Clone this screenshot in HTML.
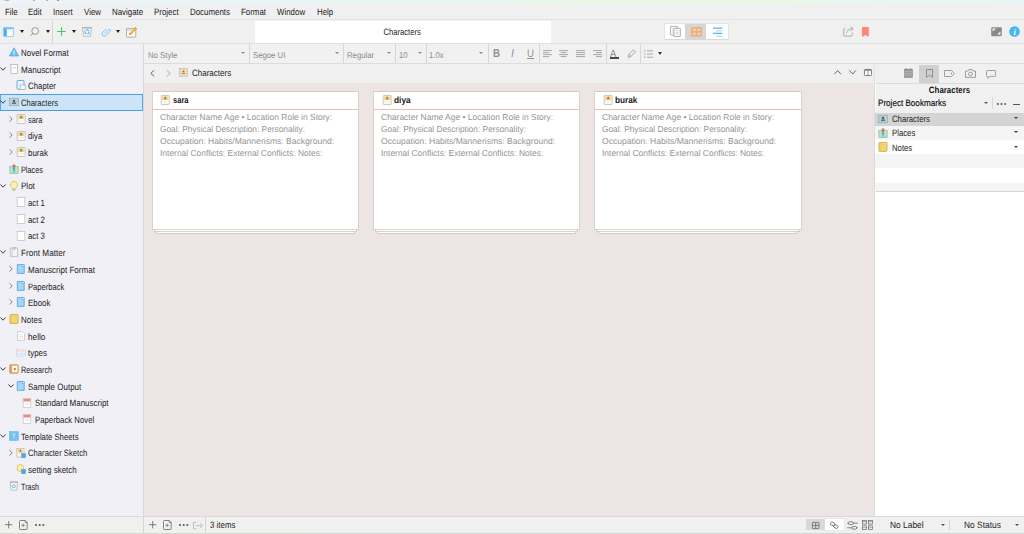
<!DOCTYPE html>
<html><head><meta charset="utf-8"><title>Scrivener - Characters</title>
<style>
html,body{margin:0;padding:0;}
body{width:1024px;height:534px;position:relative;overflow:hidden;background:#f0f0f0;font-family:"Liberation Sans",sans-serif;font-size:10px;color:#1a1a1a;line-height:1;}
.abs,#app *{position:absolute;}
#app{position:absolute;left:0;top:0;width:1024px;height:534px;overflow:hidden;}
#app svg{position:static;display:block;overflow:visible;}
#app svg *{position:static;}
.t{display:inline-block;white-space:nowrap;font-size:10px;line-height:12px;height:12px;transform:scale(var(--sx,.79),var(--sy,.92)) skewX(.1deg);transform-origin:0 50%;}
.tc{transform-origin:50% 50%;}
/* title strip */
#strip{left:0;top:0;width:1024px;height:4px;overflow:hidden;background:linear-gradient(90deg,#eef3f8 0%,#eaf4f7 20%,#e5f6f4 40%,#ebf6e3 62%,#eaf7e6 76%,#e8f6f3 86%,#e8f5f6 100%);}
#menubar{left:0;top:4px;width:1024px;height:15.5px;background:#f0f0f0;}
#menubar .t{top:1.8px;}
#toolbar{left:0;top:19px;width:1024px;height:25px;background:#f0f0f0;border-top:1px solid #e3e3e3;border-bottom:1px solid #e0e0e0;box-sizing:border-box;}
#titlebox{left:254.8px;top:20.5px;width:296.4px;height:22.7px;background:#fff;}
/* binder */
#binder{left:0;top:43.7px;width:143px;height:472.3px;background:#f0f0f6;}
#bdiv{left:143px;top:43.7px;width:1px;height:472.3px;background:#d8d8dc;}
.row{left:0;width:143px;height:16.69px;}
#selrow{left:0;top:94px;width:143.4px;height:16.8px;background:#cce4f7;box-shadow:inset 0 0 0 0.9px #4a9fe6;}
.row .lbl{top:3.2px;}
.row .ico{top:3.4px;}
/* format bar */
#fmtbar{left:144px;top:44px;width:880px;height:20px;background:#f1f1f1;border-bottom:1px solid #dcdcdc;box-sizing:border-box;}
#fmtbar .t{color:#898989;top:4.6px;--sx:.775;--sy:.85}
.vsep{width:0.8px;background:#d6d6d6;}
/* header bar */
#hdr{left:144px;top:64px;width:731px;height:19px;background:#f0f0f0;}
#cork{left:144px;top:82.9px;width:730.4px;height:433.1px;background:#ede5e3;}
#cdiv{left:874.3px;top:64px;width:0.9px;height:452px;background:linear-gradient(#e3e3e3 19px,#dedad9 19px);}
#inspfill{left:875.2px;top:83px;width:1px;height:433px;background:#fff;}
.card{top:91.8px;width:205.5px;height:137.5px;background:#fff;box-shadow:0 0 0 0.8px #d2cdcc;}
.stack{top:91.8px;width:205.5px;background:#fff;box-shadow:0 0 0 0.8px #cbc7c6;}
.stack.s1{height:139.5px;width:201.5px;}
.stack.s2{height:141.6px;width:197.1px;}
.card .cico{left:7.9px;top:3.6px;}
.card .ctitle{left:20px;top:2.6px;--sy:.9}
.card .cline{left:0;top:17.6px;width:100%;height:0.8px;background:#f2bcb6;}
.card .syn{left:7px;color:#949494;--sy:.87}
/* inspector */
#insp{left:876px;top:64px;width:148px;height:452px;background:#fff;clip-path:inset(0 0 0 -1px);}
#inspin{left:0;top:-0.7px;width:148px;height:453px;}
#insptabs{left:0;top:0;width:148px;height:20.6px;background:#f0f0f0;border-bottom:0.9px solid #dadada;box-sizing:border-box;}
#insptabsel{left:43px;top:1.6px;width:19.8px;height:18.2px;background:#d0d0d0;}
#insphead{left:0;top:20.6px;width:148px;height:28.3px;background:#f0f0f0;}
.lrow{left:-0.8px;width:148.8px;height:14.2px;}
.lrow .t{left:16.8px;top:1.6px;--sx:.775}
.lrow .ico{left:2.8px;top:2.2px;}
.tri{width:0;height:0;border-left:2.9px solid transparent;border-right:2.9px solid transparent;border-top:3.3px solid #1c1c1c;margin-left:-0.2px;}
/* footer */
#footer{left:0;top:516px;width:1024px;height:16.8px;background:#f0f0f0;border-top:0.8px solid #d9d9d9;box-sizing:border-box;}
#bottomstrip{left:0;top:532.9px;width:1024px;height:1.1px;background:linear-gradient(90deg,#cddccf 0%,#c9dcd2 50%,#c8dad7 100%);}
</style></head>
<body>
<div id="app">
<div id="strip"><span class="t" style="left:18px;top:-9.6px;--sx:.8;color:#333">sample project - Scrivener</span><span style="left:4px;top:-1px;width:6px;height:2.4px;border-radius:0 0 3px 3px;background:#b9bcc2"></span></div>
<div id="menubar">
<span class="t" style="left:5.1px">File</span><span class="t" style="left:28.3px">Edit</span><span class="t" style="left:53px">Insert</span><span class="t" style="left:83.8px">View</span><span class="t" style="left:111.8px">Navigate</span><span class="t" style="left:154.2px">Project</span><span class="t" style="left:189.8px">Documents</span><span class="t" style="left:240.6px">Format</span><span class="t" style="left:276.6px">Window</span><span class="t" style="left:316.6px">Help</span>
</div>
<div id="toolbar"></div>
<div id="titlebox"><span class="t tc" style="left:-0.7px;width:100%;text-align:center;top:5.9px;--sx:.762">Characters</span></div>
<div id="tbicons">
<!-- layout icon -->
<span style="left:3.2px;top:27px"><svg width="11" height="10" viewBox="0 0 11 10"><rect x="0.4" y="0.4" width="10.2" height="9.2" rx="0.8" fill="#f5f9fc" stroke="#7cc8f6" stroke-width="0.8"/><rect x="0.8" y="0.8" width="3" height="8.4" fill="#4cb0f0"/><rect x="0.8" y="0.8" width="9.4" height="1.4" fill="#6cc0f5"/></svg></span>
<span class="tri" style="left:19.8px;top:30.2px"></span>
<span style="left:30.2px;top:27px"><svg width="10" height="10" viewBox="0 0 10 10"><circle cx="5.2" cy="4" r="3.4" fill="none" stroke="#858585" stroke-width="0.8"/><path d="M2.9 6.5 L0.8 8.8" stroke="#858585" stroke-width="1"/></svg></span>
<span class="tri" style="left:46px;top:30.2px"></span>
<span class="vsep" style="left:52.2px;top:20.5px;height:22.5px"></span>
<span style="left:57.3px;top:27.4px"><svg width="9" height="9" viewBox="0 0 9 9"><path d="M4.5 0.3 V8.7 M0.3 4.5 H8.7" stroke="#3cc46e" stroke-width="1.1"/></svg></span>
<span class="tri" style="left:72.6px;top:30.2px"></span>
<span style="left:82px;top:27px"><svg width="10" height="10" viewBox="0 0 10 10"><path d="M0.4 0.7 H9.6 L8.4 9.3 H1.6 Z" fill="#f6f6f6" stroke="#b0b0b0" stroke-width="0.8"/><path d="M0.4 0.9 H9.6" stroke="#a8a8a8" stroke-width="1"/><circle cx="5" cy="5" r="2.1" fill="none" stroke="#4fb0f5" stroke-width="1.15" stroke-dasharray="3.5 0.9" stroke-dashoffset="1"/></svg></span>
<span style="left:100.6px;top:26.6px"><svg width="10" height="10.4" viewBox="0 0 10 10.4"><g transform="translate(5.1 5.2) rotate(45) scale(.92) translate(-3 -6.2)"><path d="M0.5 3.6 V9 A2.45 2.45 0 0 0 5.4 9 V2.2 A1.2 1.2 0 0 0 3 2.2 V8.6" fill="none" stroke="#63bff5" stroke-width="0.9"/></g></svg></span>
<span class="tri" style="left:116.2px;top:30.2px"></span>
<span style="left:126px;top:26.6px"><svg width="11" height="10.6" viewBox="0 0 11 10.6"><rect x="0.5" y="1.5" width="9.3" height="8.6" rx="0.5" fill="#f9f9f9" stroke="#a2a2a2" stroke-width="0.8"/><path d="M0.5 2 H9.8 M0.5 3.4 H9.8" stroke="#b9b9b9" stroke-width="0.6"/><path d="M4.1 7.2 L9.9 1.2" stroke="#f1b620" stroke-width="2.1"/><path d="M9.2 0.3 L10.8 1.9" stroke="#8a8a8a" stroke-width="0.9"/><path d="M3.4 8 L4.9 6.5 L3.3 6.6 Z" fill="#555"/></svg></span>
<!-- view mode buttons -->
<span style="left:664.6px;top:24.3px;width:63px;height:14.3px;background:#fff;box-shadow:0 0 0 0.6px #e0e0e0,0 0.8px 0 0.2px #cfcfcf"></span>
<span style="left:685.2px;top:24.3px;width:20.8px;height:14.3px;background:#d6d6d6"></span>
<span style="left:670.4px;top:26px"><svg width="10.8" height="11" viewBox="0 0 10.8 11"><rect x="0.4" y="0.4" width="6.9" height="8.6" rx="0.5" fill="#fcfcfc" stroke="#9a9a9a" stroke-width="0.75"/><path d="M1.8 2.6 H3.4 M1.8 4.4 H3.4 M1.8 6.2 H3.4" stroke="#c2c2c2" stroke-width="0.5"/><rect x="3.8" y="2.3" width="6.5" height="8.3" rx="0.5" fill="#fcfcfc" stroke="#8f8f8f" stroke-width="0.75"/><path d="M5.4 4.6 H8.8 M5.4 6.4 H8.8 M5.4 8.2 H8.8" stroke="#bdbdbd" stroke-width="0.55"/></svg></span>
<span style="left:691.3px;top:26.9px"><svg width="10.9" height="9.6" viewBox="0 0 10.9 9.6"><rect x="0" y="0" width="10.9" height="9.6" rx="1.3" fill="#f1ad72"/><g fill="#ead2bf"><rect x="1.75" y="1.55" width="3.15" height="2.45"/><rect x="6.2" y="1.55" width="3.15" height="2.45"/><rect x="1.75" y="5.6" width="3.15" height="2.45"/><rect x="6.2" y="5.6" width="3.15" height="2.45"/></g></svg></span>
<span style="left:712.9px;top:26.6px"><svg width="9.4" height="10" viewBox="0 0 9.4 10"><path d="M0 1.1 H9.3 M0 6.4 H9.3" stroke="#56b6f1" stroke-width="1.3"/><path d="M3 3.9 H9.3 M3 9.2 H9.3" stroke="#8acdf5" stroke-width="0.85"/></svg></span>
<!-- share + bookmark -->
<span style="left:843px;top:26.2px"><svg width="11" height="10.8" viewBox="0 0 11 10.8"><path d="M2.4 2.6 H1.6 Q0.7 2.6 0.7 3.5 V9.2 Q0.7 10.1 1.6 10.1 H8.4 Q9.3 10.1 9.3 9.2 V6.6" fill="none" stroke="#a2a2a2" stroke-width="0.85"/><path d="M3.6 7.4 C3.6 4.4 5.6 2.8 9.6 2.8 M7.6 0.6 L10.2 2.8 L7.6 5" fill="none" stroke="#a2a2a2" stroke-width="0.85"/></svg></span>
<span style="left:862.4px;top:26.9px"><svg width="6.8" height="10" viewBox="0 0 6.8 10"><path d="M0.5 0 H6.3 Q6.8 0 6.8 0.5 V9.9 L3.4 7.9 L0 9.9 V0.5 Q0 0 0.5 0 Z" fill="#ff847a"/></svg></span>
<!-- right icons -->
<span style="left:991.2px;top:27.2px"><svg width="11" height="9.4" viewBox="0 0 11 9.4"><rect x="0.2" y="0.2" width="10.6" height="9" rx="1.2" fill="#8a8a8a"/><path d="M1.6 4.6 L5 1.4 H1.6 Z M9.4 4.4 L6 7.6 H9.4 Z" fill="#f3f3f3"/></svg></span>
<span style="left:1009.2px;top:25.8px"><svg width="11" height="11" viewBox="0 0 11 11"><circle cx="5.5" cy="5.5" r="5.3" fill="#46b6f2"/><text x="5.7" y="8.6" font-family="Liberation Serif,serif" font-style="italic" font-weight="bold" font-size="8.6" text-anchor="middle" fill="#fff">i</text></svg></span>
</div>

<div id="binder">
</div>
<div id="selrow"></div>
<div id="tree" style="left:0;top:0">
<div class="row" style="top:43.70px"><span class="ico" style="left:9.4px"><svg width="10" height="10" viewBox="0 0 10 10"><path d="M5 0.8 L9.6 9 H0.4 Z" fill="#6cc2f4" stroke="#46a4e4" stroke-width="0.7"/><rect x="4.5" y="3.6" width="1" height="3" fill="#fff"/><rect x="4.5" y="7.2" width="1" height="1" fill="#fff"/></svg></span><span class="lbl t" style="left:20.9px;--sx:0.795">Novel Format</span></div>
<div class="row" style="top:60.39px"><span class="arr" style="left:0.0px;top:6.3px"><svg width="6" height="4" viewBox="0 0 6 4"><path d="M0.4 0.5 L3 3.2 L5.6 0.5" fill="none" stroke="#333" stroke-width="0.95"/></svg></span><span class="ico" style="left:9.4px"><svg width="10" height="10" viewBox="0 0 10 10"><rect x="1.5" y="0.5" width="7" height="9" fill="#fff" stroke="#a9a9a9" stroke-width="0.7"/><rect x="1.5" y="0.5" width="1.6" height="9" fill="#e4e4e4"/><rect x="4.3" y="3" width="2.4" height="1.2" fill="#bcd"/></svg></span><span class="lbl t" style="left:20.9px;--sx:0.807">Manuscript</span></div>
<div class="row" style="top:77.08px"><span class="ico" style="left:15.8px"><svg width="10" height="10" viewBox="0 0 10 10"><rect x="1" y="0.5" width="7" height="8.6" rx="0.8" fill="#eaf4fd" stroke="#5aa7e6" stroke-width="0.9"/><rect x="4.2" y="5" width="5" height="4.4" fill="#fff" stroke="#9a9a9a" stroke-width="0.6"/></svg></span><span class="lbl t" style="left:27.8px;--sx:0.784">Chapter</span></div>
<div class="row" style="top:93.77px"><span class="arr" style="left:0.0px;top:6.3px"><svg width="6" height="4" viewBox="0 0 6 4"><path d="M0.4 0.5 L3 3.2 L5.6 0.5" fill="none" stroke="#333" stroke-width="0.95"/></svg></span><span class="ico" style="left:9.4px"><svg width="10" height="10" viewBox="0 0 10 10"><rect x="0.6" y="1.2" width="8.8" height="7.6" fill="#b9ccd9" stroke="#8aa" stroke-width="0.6"/><circle cx="5" cy="4" r="1.2" fill="#4f5b57"/><rect x="3" y="5.6" width="4" height="1.2" fill="#4f5b57"/></svg></span><span class="lbl t" style="left:20.9px;--sx:0.755">Characters</span></div>
<div class="row" style="top:110.46px"><span class="arr" style="left:8.6px;top:5.3px"><svg width="4" height="6" viewBox="0 0 4 6"><path d="M0.6 0.4 L3.2 3 L0.6 5.6" fill="none" stroke="#858585" stroke-width="1"/></svg></span><span class="ico" style="left:15.8px"><svg width="10" height="10" viewBox="0 0 10 10"><rect x="1.2" y="0.5" width="8" height="9" rx="0.5" fill="#fdfdfb" stroke="#b2b2b2" stroke-width="0.7"/><rect x="2" y="1.3" width="6.4" height="3.8" fill="#f6d68c"/><circle cx="5.2" cy="2.5" r="0.75" fill="#7a5a32"/><rect x="3.9" y="3.5" width="2.6" height="0.8" fill="#7a5a32"/><path d="M2.4 6.4 H8 M2.4 7.8 H8" stroke="#e4e4e4" stroke-width="0.5"/></svg></span><span class="lbl t" style="left:27.8px;--sx:0.738">sara</span></div>
<div class="row" style="top:127.15px"><span class="arr" style="left:8.6px;top:5.3px"><svg width="4" height="6" viewBox="0 0 4 6"><path d="M0.6 0.4 L3.2 3 L0.6 5.6" fill="none" stroke="#858585" stroke-width="1"/></svg></span><span class="ico" style="left:15.8px"><svg width="10" height="10" viewBox="0 0 10 10"><rect x="1.2" y="0.5" width="8" height="9" rx="0.5" fill="#fdfdfb" stroke="#b2b2b2" stroke-width="0.7"/><rect x="2" y="1.3" width="6.4" height="3.8" fill="#f6d68c"/><circle cx="5.2" cy="2.5" r="0.75" fill="#7a5a32"/><rect x="3.9" y="3.5" width="2.6" height="0.8" fill="#7a5a32"/><path d="M2.4 6.4 H8 M2.4 7.8 H8" stroke="#e4e4e4" stroke-width="0.5"/></svg></span><span class="lbl t" style="left:27.8px;--sx:0.782">diya</span></div>
<div class="row" style="top:143.84px"><span class="arr" style="left:8.6px;top:5.3px"><svg width="4" height="6" viewBox="0 0 4 6"><path d="M0.6 0.4 L3.2 3 L0.6 5.6" fill="none" stroke="#858585" stroke-width="1"/></svg></span><span class="ico" style="left:15.8px"><svg width="10" height="10" viewBox="0 0 10 10"><rect x="1.2" y="0.5" width="8" height="9" rx="0.5" fill="#fdfdfb" stroke="#b2b2b2" stroke-width="0.7"/><rect x="2" y="1.3" width="6.4" height="3.8" fill="#f6d68c"/><circle cx="5.2" cy="2.5" r="0.75" fill="#7a5a32"/><rect x="3.9" y="3.5" width="2.6" height="0.8" fill="#7a5a32"/><path d="M2.4 6.4 H8 M2.4 7.8 H8" stroke="#e4e4e4" stroke-width="0.5"/></svg></span><span class="lbl t" style="left:27.8px;--sx:0.795">burak</span></div>
<div class="row" style="top:160.53px"><span class="ico" style="left:9.4px"><svg width="10" height="10" viewBox="0 0 10 10"><rect x="0.8" y="2.6" width="8.4" height="6.8" fill="#bfe3c2" stroke="#7fb98a" stroke-width="0.6"/><rect x="3.6" y="2.6" width="2.8" height="6.8" fill="#8cc8ee"/><circle cx="5" cy="1.8" r="1.5" fill="#e8695a"/><rect x="4.6" y="2.6" width="0.8" height="4" fill="#3a8a4a"/></svg></span><span class="lbl t" style="left:20.9px;--sx:0.729">Places</span></div>
<div class="row" style="top:177.22px"><span class="arr" style="left:0.0px;top:6.3px"><svg width="6" height="4" viewBox="0 0 6 4"><path d="M0.4 0.5 L3 3.2 L5.6 0.5" fill="none" stroke="#333" stroke-width="0.95"/></svg></span><span class="ico" style="left:9.4px"><svg width="10" height="10" viewBox="0 0 10 10"><path d="M5 0.4 A3.5 3.5 0 0 1 7.3 6.6 L6.6 7.8 H3.4 L2.7 6.6 A3.5 3.5 0 0 1 5 0.4 Z" fill="#fdf1ad" stroke="#d8bd58" stroke-width="0.8"/><rect x="3.6" y="7.9" width="2.8" height="1.9" rx="0.6" fill="#b4b4b4"/></svg></span><span class="lbl t" style="left:20.9px;--sx:0.804">Plot</span></div>
<div class="row" style="top:193.91px"><span class="ico" style="left:15.8px"><svg width="10" height="10" viewBox="0 0 10 10"><rect x="1.2" y="0.6" width="7.6" height="8.8" fill="#fff" stroke="#bdbdbd" stroke-width="0.7"/></svg></span><span class="lbl t" style="left:27.8px;--sx:0.778">act 1</span></div>
<div class="row" style="top:210.60px"><span class="ico" style="left:15.8px"><svg width="10" height="10" viewBox="0 0 10 10"><rect x="1.2" y="0.6" width="7.6" height="8.8" fill="#fff" stroke="#bdbdbd" stroke-width="0.7"/></svg></span><span class="lbl t" style="left:27.8px;--sx:0.778">act 2</span></div>
<div class="row" style="top:227.29px"><span class="ico" style="left:15.8px"><svg width="10" height="10" viewBox="0 0 10 10"><rect x="1.2" y="0.6" width="7.6" height="8.8" fill="#fff" stroke="#bdbdbd" stroke-width="0.7"/></svg></span><span class="lbl t" style="left:27.8px;--sx:0.778">act 3</span></div>
<div class="row" style="top:243.98px"><span class="arr" style="left:0.0px;top:6.3px"><svg width="6" height="4" viewBox="0 0 6 4"><path d="M0.4 0.5 L3 3.2 L5.6 0.5" fill="none" stroke="#333" stroke-width="0.95"/></svg></span><span class="ico" style="left:9.4px"><svg width="10" height="10" viewBox="0 0 10 10"><rect x="1.2" y="1" width="7.6" height="8.5" fill="#f4f4f4" stroke="#b5b5b5" stroke-width="0.7"/><rect x="2.4" y="2" width="1.6" height="7.4" fill="#dcdcdc"/><rect x="4" y="0.3" width="2.2" height="2" fill="#cfcfcf" stroke="#a5a5a5" stroke-width="0.4"/></svg></span><span class="lbl t" style="left:20.9px;--sx:0.817">Front Matter</span></div>
<div class="row" style="top:260.67px"><span class="arr" style="left:8.6px;top:5.3px"><svg width="4" height="6" viewBox="0 0 4 6"><path d="M0.6 0.4 L3.2 3 L0.6 5.6" fill="none" stroke="#858585" stroke-width="1"/></svg></span><span class="ico" style="left:15.8px"><svg width="10" height="10" viewBox="0 0 10 10"><path d="M1.3 0.6 H8.2 V9.4 H1.3 Z" fill="#a4d6f8" stroke="#4d9fe0" stroke-width="0.8"/><path d="M6.4 0.6 V2.4 H8.2" fill="none" stroke="#4d9fe0" stroke-width="0.6"/><path d="M6.7 0.9 H7.9 V2.1 H6.7 Z" fill="#eef7fe"/></svg></span><span class="lbl t" style="left:27.8px;--sx:0.802">Manuscript Format</span></div>
<div class="row" style="top:277.36px"><span class="arr" style="left:8.6px;top:5.3px"><svg width="4" height="6" viewBox="0 0 4 6"><path d="M0.6 0.4 L3.2 3 L0.6 5.6" fill="none" stroke="#858585" stroke-width="1"/></svg></span><span class="ico" style="left:15.8px"><svg width="10" height="10" viewBox="0 0 10 10"><path d="M1.3 0.6 H8.2 V9.4 H1.3 Z" fill="#a4d6f8" stroke="#4d9fe0" stroke-width="0.8"/><path d="M6.4 0.6 V2.4 H8.2" fill="none" stroke="#4d9fe0" stroke-width="0.6"/><path d="M6.7 0.9 H7.9 V2.1 H6.7 Z" fill="#eef7fe"/></svg></span><span class="lbl t" style="left:27.8px;--sx:0.762">Paperback</span></div>
<div class="row" style="top:294.05px"><span class="arr" style="left:8.6px;top:5.3px"><svg width="4" height="6" viewBox="0 0 4 6"><path d="M0.6 0.4 L3.2 3 L0.6 5.6" fill="none" stroke="#858585" stroke-width="1"/></svg></span><span class="ico" style="left:15.8px"><svg width="10" height="10" viewBox="0 0 10 10"><path d="M1.3 0.6 H8.2 V9.4 H1.3 Z" fill="#a4d6f8" stroke="#4d9fe0" stroke-width="0.8"/><path d="M6.4 0.6 V2.4 H8.2" fill="none" stroke="#4d9fe0" stroke-width="0.6"/><path d="M6.7 0.9 H7.9 V2.1 H6.7 Z" fill="#eef7fe"/></svg></span><span class="lbl t" style="left:27.8px;--sx:0.789">Ebook</span></div>
<div class="row" style="top:310.74px"><span class="arr" style="left:0.0px;top:6.3px"><svg width="6" height="4" viewBox="0 0 6 4"><path d="M0.4 0.5 L3 3.2 L5.6 0.5" fill="none" stroke="#333" stroke-width="0.95"/></svg></span><span class="ico" style="left:9.4px"><svg width="10" height="10" viewBox="0 0 10 10"><rect x="1" y="0.6" width="8" height="8.8" rx="0.5" fill="#f8e07a" stroke="#c4a23a" stroke-width="0.8"/><rect x="1.2" y="0.8" width="1.4" height="8.4" fill="#e6c24e"/><path d="M3 2.6 H8.6 M3 4.4 H8.6 M3 6.2 H8.6 M3 8 H8.6" stroke="#dcbc4c" stroke-width="0.5"/></svg></span><span class="lbl t" style="left:20.9px;--sx:0.799">Notes</span></div>
<div class="row" style="top:327.43px"><span class="ico" style="left:15.8px"><svg width="10" height="10" viewBox="0 0 10 10"><path d="M1.6 0.6 H6.4 L8.6 2.8 V9.4 H1.6 Z" fill="#fff" stroke="#bdbdbd" stroke-width="0.7"/><path d="M3 4 H7 M3 5.6 H7 M3 7.2 H7" stroke="#d6d6d6" stroke-width="0.6"/></svg></span><span class="lbl t" style="left:27.8px;--sx:0.822">hello</span></div>
<div class="row" style="top:344.12px"><span class="ico" style="left:15.8px"><svg width="10" height="10" viewBox="0 0 10 10"><rect x="0.6" y="2" width="8.8" height="6" fill="#fff" stroke="#c7c7c7" stroke-width="0.6"/><rect x="0.9" y="2.3" width="8.2" height="1.8" fill="#fbdcdc"/><rect x="0.9" y="4.4" width="8.2" height="3.3" fill="#dcecfb"/></svg></span><span class="lbl t" style="left:27.8px;--sx:0.790">types</span></div>
<div class="row" style="top:360.81px"><span class="arr" style="left:0.0px;top:6.3px"><svg width="6" height="4" viewBox="0 0 6 4"><path d="M0.4 0.5 L3 3.2 L5.6 0.5" fill="none" stroke="#333" stroke-width="0.95"/></svg></span><span class="ico" style="left:9.4px"><svg width="10" height="10" viewBox="0 0 10 10"><rect x="0.8" y="0.8" width="8.4" height="8.4" rx="1" fill="#e9a660" stroke="#b97a3a" stroke-width="0.7"/><rect x="3" y="1.6" width="5.6" height="6.8" fill="#fdf3e2"/><circle cx="5.8" cy="5" r="1" fill="#b9603a"/></svg></span><span class="lbl t" style="left:20.9px;--sx:0.728">Research</span></div>
<div class="row" style="top:377.50px"><span class="arr" style="left:7.8px;top:6.3px"><svg width="6" height="4" viewBox="0 0 6 4"><path d="M0.4 0.5 L3 3.2 L5.6 0.5" fill="none" stroke="#333" stroke-width="0.95"/></svg></span><span class="ico" style="left:15.8px"><svg width="10" height="10" viewBox="0 0 10 10"><path d="M1.3 0.6 H8.2 V9.4 H1.3 Z" fill="#a4d6f8" stroke="#4d9fe0" stroke-width="0.8"/><path d="M6.4 0.6 V2.4 H8.2" fill="none" stroke="#4d9fe0" stroke-width="0.6"/><path d="M6.7 0.9 H7.9 V2.1 H6.7 Z" fill="#eef7fe"/></svg></span><span class="lbl t" style="left:27.8px;--sx:0.798">Sample Output</span></div>
<div class="row" style="top:394.19px"><span class="ico" style="left:22.4px"><svg width="10" height="10" viewBox="0 0 10 10"><rect x="1.2" y="0.6" width="7.6" height="8.8" fill="#fff" stroke="#c4c4c4" stroke-width="0.7"/><rect x="1.5" y="0.9" width="7" height="2.6" fill="#f0877a"/><path d="M3 5.4 H7 M3 7 H7" stroke="#ddd" stroke-width="0.6"/></svg></span><span class="lbl t" style="left:34.8px;--sx:0.797">Standard Manuscript</span></div>
<div class="row" style="top:410.88px"><span class="ico" style="left:22.4px"><svg width="10" height="10" viewBox="0 0 10 10"><rect x="1.2" y="0.6" width="7.6" height="8.8" fill="#fff" stroke="#c4c4c4" stroke-width="0.7"/><rect x="1.5" y="0.9" width="7" height="2.6" fill="#f0877a"/><path d="M3 5.4 H7 M3 7 H7" stroke="#ddd" stroke-width="0.6"/></svg></span><span class="lbl t" style="left:34.8px;--sx:0.778">Paperback Novel</span></div>
<div class="row" style="top:427.57px"><span class="arr" style="left:0.0px;top:6.3px"><svg width="6" height="4" viewBox="0 0 6 4"><path d="M0.4 0.5 L3 3.2 L5.6 0.5" fill="none" stroke="#333" stroke-width="0.95"/></svg></span><span class="ico" style="left:9.4px"><svg width="10" height="10" viewBox="0 0 10 10"><rect x="0.6" y="0.6" width="8.8" height="8.8" fill="#72c1f4" stroke="#52abea" stroke-width="0.5"/><path d="M3.4 3.2 H6.6 M5 3.2 V7.2" stroke="#d9eefc" stroke-width="0.9"/></svg></span><span class="lbl t" style="left:20.9px;--sx:0.772">Template Sheets</span></div>
<div class="row" style="top:444.26px"><span class="arr" style="left:8.6px;top:5.3px"><svg width="4" height="6" viewBox="0 0 4 6"><path d="M0.6 0.4 L3.2 3 L0.6 5.6" fill="none" stroke="#858585" stroke-width="1"/></svg></span><span class="ico" style="left:15.8px"><svg width="10" height="10" viewBox="0 0 10 10"><rect x="0.8" y="0.5" width="7.2" height="8.6" fill="#fbf3dc" stroke="#b9b9b9" stroke-width="0.7"/><rect x="1.8" y="1.4" width="5" height="3.6" fill="#f7d58a"/><circle cx="4.3" cy="2.6" r="0.9" fill="#8a5a2a"/><rect x="5.6" y="5.6" width="4" height="4" fill="#4aa8ee" stroke="#2d8ad6" stroke-width="0.4"/></svg></span><span class="lbl t" style="left:27.8px;--sx:0.767">Character Sketch</span></div>
<div class="row" style="top:460.95px"><span class="ico" style="left:15.8px"><svg width="10" height="10" viewBox="0 0 10 10"><circle cx="4.4" cy="4" r="3.4" fill="#fdf0a8" stroke="#d9bd55" stroke-width="0.8"/><rect x="5.6" y="5.6" width="4" height="4" fill="#4aa8ee" stroke="#2d8ad6" stroke-width="0.4"/></svg></span><span class="lbl t" style="left:27.8px;--sx:0.797">setting sketch</span></div>
<div class="row" style="top:477.64px"><span class="ico" style="left:9.4px"><svg width="10" height="10" viewBox="0 0 10 10"><path d="M1.2 1 H8.6 L7.8 9.2 H2 Z" fill="#f7f7f7" stroke="#b0b0b0" stroke-width="0.75"/><path d="M1.2 1.1 H8.6" stroke="#a6a6a6" stroke-width="0.9"/><circle cx="4.9" cy="5.3" r="1.5" fill="none" stroke="#5fb2f0" stroke-width="0.9"/></svg></span><span class="lbl t" style="left:20.9px;--sx:0.719">Trash</span></div>
</div>
<div id="bdiv"></div>

<div id="fmtbar">
<span class="t" style="left:3.7px">No Style</span>
<span class="tri" style="left:97px;top:8px;border-top-color:#8a8a8a;border-left-width:2.1px;border-right-width:2.1px;border-top-width:2.4px"></span>
<span class="vsep" style="left:105.4px;top:0;height:19px"></span>
<span class="t" style="left:109.2px">Segoe UI</span>
<span class="tri" style="left:191.2px;top:8px;border-top-color:#8a8a8a;border-left-width:2.1px;border-right-width:2.1px;border-top-width:2.4px"></span>
<span class="vsep" style="left:199px;top:0;height:19px"></span>
<span class="t" style="left:202.6px">Regular</span>
<span class="tri" style="left:243.2px;top:8px;border-top-color:#8a8a8a;border-left-width:2.1px;border-right-width:2.1px;border-top-width:2.4px"></span>
<span class="vsep" style="left:251.2px;top:0;height:19px"></span>
<span class="t" style="left:255px">10</span>
<span class="tri" style="left:273.8px;top:8px;border-top-color:#8a8a8a;border-left-width:2.1px;border-right-width:2.1px;border-top-width:2.4px"></span>
<span class="vsep" style="left:282px;top:0;height:19px"></span>
<span class="t" style="left:285.4px">1.0x</span>
<span class="tri" style="left:335.6px;top:8px;border-top-color:#8a8a8a;border-left-width:2.1px;border-right-width:2.1px;border-top-width:2.4px"></span>
<span class="vsep" style="left:344.4px;top:0;height:19px"></span>
<span class="t" style="left:349.4px;top:3.2px;font-weight:bold;font-size:12px;--sx:.8;--sy:.98;color:#909090">B</span>
<span class="t" style="left:367.2px;top:3.2px;font-style:italic;font-size:12px;--sx:.9;--sy:.98;color:#909090">I</span>
<span class="t" style="left:383px;top:3.1px;font-size:11.4px;--sx:.84;--sy:.96;color:#909090">U</span>
<span style="left:383px;top:14.3px;width:7px;height:0.8px;background:#8f8f8f"></span>
<span class="vsep" style="left:394.6px;top:0;height:19px"></span>
<span style="left:399px;top:6.2px"><svg width="9" height="8" viewBox="0 0 9 8"><path d="M0 0.6 H9 M0 2.6 H6 M0 4.6 H9 M0 6.6 H6" stroke="#8f8f8f" stroke-width="0.75"/></svg></span>
<span style="left:415.4px;top:6.2px"><svg width="9" height="8" viewBox="0 0 9 8"><path d="M0 0.6 H9 M1.5 2.6 H7.5 M0 4.6 H9 M1.5 6.6 H7.5" stroke="#8f8f8f" stroke-width="0.75"/></svg></span>
<span style="left:432.4px;top:6.2px"><svg width="9" height="8" viewBox="0 0 9 8"><path d="M0 0.6 H9 M0 2.6 H9 M0 4.6 H9 M0 6.6 H9" stroke="#8f8f8f" stroke-width="0.75"/></svg></span>
<span style="left:448.8px;top:6.2px"><svg width="9" height="8" viewBox="0 0 9 8"><path d="M0 0.6 H9 M3 2.6 H9 M0 4.6 H9 M3 6.6 H9" stroke="#8f8f8f" stroke-width="0.75"/></svg></span>
<span class="vsep" style="left:462.2px;top:0;height:19px"></span>
<span class="t" style="left:466.4px;top:2.8px;font-size:11px;--sx:.86;--sy:.95;color:#8c8c8c">A</span>
<span style="left:465.6px;top:13.3px;width:9.4px;height:1.5px;background:#4a4a4a"></span>
<span style="left:483px;top:5px"><svg width="9" height="9" viewBox="0 0 9 9"><path d="M1 8.4 L2 5.4 L6.4 0.8 L8.4 2.8 L4 7.4 Z M2 5.4 L4 7.4" fill="none" stroke="#8d8d8d" stroke-width="0.7"/></svg></span>
<span class="vsep" style="left:496.4px;top:0;height:19px"></span>
<span style="left:500px;top:5.8px"><svg width="9" height="8" viewBox="0 0 9 8"><path d="M3 0.8 H9 M3 4 H9 M3 7.2 H9" stroke="#8d8d8d" stroke-width="0.7"/><path d="M0 0.8 H1.4 M0 4 H1.4 M0 7.2 H1.4" stroke="#8d8d8d" stroke-width="0.9"/></svg></span>
<span class="tri" style="left:514.6px;top:8.2px;border-top-color:#3a3a3a;border-left-width:2.8px;border-right-width:2.8px;border-top-width:3.2px"></span>
</div>

<div id="hdr">
<span style="left:6px;top:5.6px"><svg width="5" height="6.6" viewBox="0 0 5 6.6"><path d="M4.2 0.3 L0.8 3.3 L4.2 6.3" fill="none" stroke="#444" stroke-width="0.8"/></svg></span>
<span style="left:21.6px;top:5.6px"><svg width="5" height="6.6" viewBox="0 0 5 6.6"><path d="M0.8 0.3 L4.2 3.3 L0.8 6.3" fill="none" stroke="#9c9c9c" stroke-width="0.8"/></svg></span>
<span style="left:34.8px;top:4.4px"><svg width="9" height="8.6" viewBox="0 0 9 8.6"><rect x="0.4" y="0.4" width="8.2" height="7.8" fill="#f6dcae" stroke="#bdbdbd" stroke-width="0.7"/><circle cx="4.5" cy="3.3" r="0.9" fill="#8a6a3a"/><rect x="2.8" y="4.9" width="3.4" height="0.9" fill="#9a7a4a"/></svg></span>
<span class="t" style="left:47.6px;top:2.7px;--sx:.8">Characters</span>
<span style="left:689.9px;top:5.6px"><svg width="7.4" height="4.6" viewBox="0 0 7.4 4.6"><path d="M0.4 4.2 L3.7 0.6 L7 4.2" fill="none" stroke="#444" stroke-width="0.8"/></svg></span>
<span style="left:705.1px;top:6px"><svg width="7.4" height="4.6" viewBox="0 0 7.4 4.6"><path d="M0.4 0.4 L3.7 4 L7 0.4" fill="none" stroke="#444" stroke-width="0.8"/></svg></span>
<span style="left:720.2px;top:5.1px"><svg width="8" height="7" viewBox="0 0 8 7"><rect x="0.45" y="0.45" width="7.1" height="6.1" rx="0.8" fill="#fafafa" stroke="#6e6e6e" stroke-width="0.9"/><path d="M0.5 1.2 H7.5" stroke="#6e6e6e" stroke-width="0.9"/><path d="M4 1.4 V6.4" stroke="#7a7a7a" stroke-width="0.8"/></svg></span>
</div>

<div id="cork"></div>
<div id="cards" style="left:0;top:0">
<div class="stack s2" style="left:156.7px"></div><div class="stack s1" style="left:154.5px"></div>
<div class="card" style="left:152.5px"><span class="cico"><svg width="10" height="10" viewBox="0 0 10 10"><rect x="1.2" y="0.5" width="8" height="9" rx="0.5" fill="#fdfdfb" stroke="#b2b2b2" stroke-width="0.7"/><rect x="2" y="1.3" width="6.4" height="3.8" fill="#f6d68c"/><circle cx="5.2" cy="2.5" r="0.75" fill="#7a5a32"/><rect x="3.9" y="3.5" width="2.6" height="0.8" fill="#7a5a32"/><path d="M2.4 6.4 H8 M2.4 7.8 H8" stroke="#e4e4e4" stroke-width="0.5"/></svg></span><b class="t ctitle" style="--sx:0.756">sara</b><div class="cline"></div>
<span class="t syn" style="top:19.40px;--sx:0.848">Character Name Age • Location Role in Story:</span><span class="t syn" style="top:31.48px;--sx:0.831">Goal: Physical Description: Personality:</span><span class="t syn" style="top:43.56px;--sx:0.856">Occupation: Habits/Mannerisms: Background:</span><span class="t syn" style="top:55.64px;--sx:0.844">Internal Conflicts: External Conflicts: Notes:</span></div>
<div class="stack s2" style="left:378.1px"></div><div class="stack s1" style="left:375.9px"></div>
<div class="card" style="left:373.9px"><span class="cico"><svg width="10" height="10" viewBox="0 0 10 10"><rect x="1.2" y="0.5" width="8" height="9" rx="0.5" fill="#fdfdfb" stroke="#b2b2b2" stroke-width="0.7"/><rect x="2" y="1.3" width="6.4" height="3.8" fill="#f6d68c"/><circle cx="5.2" cy="2.5" r="0.75" fill="#7a5a32"/><rect x="3.9" y="3.5" width="2.6" height="0.8" fill="#7a5a32"/><path d="M2.4 6.4 H8 M2.4 7.8 H8" stroke="#e4e4e4" stroke-width="0.5"/></svg></span><b class="t ctitle" style="--sx:0.830">diya</b><div class="cline"></div>
<span class="t syn" style="top:19.40px;--sx:0.848">Character Name Age • Location Role in Story:</span><span class="t syn" style="top:31.48px;--sx:0.831">Goal: Physical Description: Personality:</span><span class="t syn" style="top:43.56px;--sx:0.856">Occupation: Habits/Mannerisms: Background:</span><span class="t syn" style="top:55.64px;--sx:0.844">Internal Conflicts: External Conflicts: Notes:</span></div>
<div class="stack s2" style="left:599.4px"></div><div class="stack s1" style="left:597.2px"></div>
<div class="card" style="left:595.2px"><span class="cico"><svg width="10" height="10" viewBox="0 0 10 10"><rect x="1.2" y="0.5" width="8" height="9" rx="0.5" fill="#fdfdfb" stroke="#b2b2b2" stroke-width="0.7"/><rect x="2" y="1.3" width="6.4" height="3.8" fill="#f6d68c"/><circle cx="5.2" cy="2.5" r="0.75" fill="#7a5a32"/><rect x="3.9" y="3.5" width="2.6" height="0.8" fill="#7a5a32"/><path d="M2.4 6.4 H8 M2.4 7.8 H8" stroke="#e4e4e4" stroke-width="0.5"/></svg></span><b class="t ctitle" style="--sx:0.822">burak</b><div class="cline"></div>
<span class="t syn" style="top:19.40px;--sx:0.848">Character Name Age • Location Role in Story:</span><span class="t syn" style="top:31.48px;--sx:0.831">Goal: Physical Description: Personality:</span><span class="t syn" style="top:43.56px;--sx:0.856">Occupation: Habits/Mannerisms: Background:</span><span class="t syn" style="top:55.64px;--sx:0.844">Internal Conflicts: External Conflicts: Notes:</span></div>
</div>
<div id="inspfill"></div><div id="cdiv"></div>

<div id="insp"><div id="inspin">
 <div id="insptabs">
  <div id="insptabsel"></div>
  <span style="left:27.6px;top:5px"><svg width="9" height="10" viewBox="0 0 9 10"><rect x="0.5" y="1.2" width="8" height="8.2" fill="#9a9a9a" stroke="#8a8a8a" stroke-width="0.6"/><path d="M1 3.6 H8 M1 5.4 H8 M1 7.2 H8" stroke="#c8c8c8" stroke-width="0.5"/><path d="M2.2 0.2 V2 M6.8 0.2 V2" stroke="#777" stroke-width="0.8"/></svg></span>
  <span style="left:49.6px;top:5.8px"><svg width="7" height="9" viewBox="0 0 7 9"><path d="M0.5 0.5 H6.5 V8.4 L3.5 6.2 L0.5 8.4 Z" fill="none" stroke="#7d7d7d" stroke-width="0.8"/></svg></span>
  <span style="left:68.2px;top:6.8px"><svg width="11" height="7" viewBox="0 0 11 7"><path d="M0.5 0.5 H7.6 L10.4 3.5 L7.6 6.5 H0.5 Z" fill="none" stroke="#8a8a8a" stroke-width="0.8"/><circle cx="7.4" cy="3.5" r="0.7" fill="#8a8a8a"/></svg></span>
  <span style="left:89px;top:5.6px"><svg width="11" height="9" viewBox="0 0 11 9"><path d="M0.5 2 H3 L3.8 0.6 H7.2 L8 2 H10.5 V8.4 H0.5 Z" fill="none" stroke="#8a8a8a" stroke-width="0.8"/><circle cx="5.5" cy="5" r="1.9" fill="none" stroke="#8a8a8a" stroke-width="0.8"/></svg></span>
  <span style="left:109.8px;top:6.8px"><svg width="10" height="9" viewBox="0 0 10 9"><path d="M1.2 0.5 H8.8 Q9.5 0.5 9.5 1.2 V5.7 Q9.5 6.4 8.8 6.4 H4 L1.9 8.4 V6.4 H1.2 Q0.5 6.4 0.5 5.7 V1.2 Q0.5 0.5 1.2 0.5 Z" fill="none" stroke="#8a8a8a" stroke-width="0.8"/></svg></span>
 </div>
 <div id="insphead">
  <b class="t tc" style="left:0;width:147px;text-align:center;top:0.1px">Characters</b>
  <span class="t" style="left:2.2px;top:13.2px;--sx:.81;color:#000;-webkit-text-stroke:0.12px #000">Project Bookmarks</span>
  <span class="tri" style="left:108.4px;top:18.4px;border-left-width:2px;border-right-width:2px;border-top-width:2.4px;border-top-color:#555"></span>
  <span class="vsep" style="left:116px;top:13.4px;height:11.6px"></span>
  <span style="left:121px;top:19.2px"><svg width="9" height="2" viewBox="0 0 9 2"><rect x="0.1" y="0.2" width="1.6" height="1.6" fill="#3a3a3a"/><rect x="3.7" y="0.2" width="1.6" height="1.6" fill="#3a3a3a"/><rect x="7.3" y="0.2" width="1.6" height="1.6" fill="#3a3a3a"/></svg></span>
  <span style="left:136.6px;top:20.0px;width:7.2px;height:0.7px;background:#555"></span>
 </div>
 <div class="lrow" style="top:48.2px;height:14.3px;background:linear-gradient(#f0f0f0 1.2px,#d4d4d4 1.2px)"><span class="ico"><svg width="10" height="10" viewBox="0 0 10 10"><rect x="0.6" y="1.2" width="8.8" height="7.6" fill="#b9ccd9" stroke="#8aa" stroke-width="0.6"/><circle cx="5" cy="4" r="1.2" fill="#4f5b57"/><rect x="3" y="5.6" width="4" height="1.2" fill="#4f5b57"/></svg></span><span class="t">Characters</span><span class="tri" style="left:139.4px;top:5.6px;border-left-width:2.5px;border-right-width:2.5px;border-top-width:2.9px;border-top-color:#3c3c3c"></span></div>
 <div class="lrow" style="top:62.5px;background:#f5f5f5"><span class="ico"><svg width="10" height="10" viewBox="0 0 10 10"><rect x="0.8" y="2.6" width="8.4" height="6.8" fill="#bfe3c2" stroke="#7fb98a" stroke-width="0.6"/><rect x="3.6" y="2.6" width="2.8" height="6.8" fill="#8cc8ee"/><circle cx="5" cy="1.8" r="1.5" fill="#e8695a"/><rect x="4.6" y="2.6" width="0.8" height="4" fill="#3a8a4a"/></svg></span><span class="t">Places</span><span class="tri" style="left:139.4px;top:5.6px;border-left-width:2.5px;border-right-width:2.5px;border-top-width:2.9px;border-top-color:#3c3c3c"></span></div>
 <div class="lrow" style="top:76.7px;background:#fff"><span class="ico"><svg width="10" height="10" viewBox="0 0 10 10"><rect x="1" y="0.6" width="8" height="8.8" rx="0.5" fill="#f8e07a" stroke="#c4a23a" stroke-width="0.8"/><rect x="1.2" y="0.8" width="1.4" height="8.4" fill="#e6c24e"/><path d="M3 2.6 H8.6 M3 4.4 H8.6 M3 6.2 H8.6 M3 8 H8.6" stroke="#dcbc4c" stroke-width="0.5"/></svg></span><span class="t">Notes</span><span class="tri" style="left:139.4px;top:5.6px;border-left-width:2.5px;border-right-width:2.5px;border-top-width:2.9px;border-top-color:#3c3c3c"></span></div>
 <div class="lrow" style="top:90.9px;background:#f5f5f5"></div>
 <div class="lrow" style="top:105.1px;background:#fff"></div>
 <div class="lrow" style="top:119.3px;height:8.2px;background:#f5f5f5"></div>
 <div style="left:0;top:127.5px;width:148px;height:0.8px;background:#d6d6d6"></div>
</div></div>

<div id="footer">
 <span style="left:4.5px;top:4.4px"><svg width="7.4" height="7.4" viewBox="0 0 7.4 7.4"><path d="M3.7 0 V7.4 M0 3.7 H7.4" stroke="#555" stroke-width="0.75"/></svg></span>
 <span style="left:19px;top:3px"><svg width="9" height="10" viewBox="0 0 9 10"><path d="M1.4 0.5 H6.2 V2.4 H8.2 V8.6 Q8.2 9.5 7.3 9.5 H1.4 Q0.5 9.5 0.5 8.6 V1.4 Q0.5 0.5 1.4 0.5 Z" fill="none" stroke="#666" stroke-width="0.8"/><path d="M6.4 0.7 Q8 0.7 8 2.4" fill="none" stroke="#888" stroke-width="0.6"/><path d="M4.2 3.6 V7 M2.5 5.3 H5.9" stroke="#666" stroke-width="0.7"/></svg></span>
 <span style="left:34.7px;top:7.2px"><svg width="9.4" height="2" viewBox="0 0 9.4 2"><rect x="0.2" y="0.2" width="1.7" height="1.6" fill="#444"/><rect x="3.85" y="0.2" width="1.7" height="1.6" fill="#444"/><rect x="7.5" y="0.2" width="1.7" height="1.6" fill="#444"/></svg></span>
 <span class="vsep" style="left:143px;top:0;height:16px"></span>
 <span style="left:148.7px;top:4.4px"><svg width="7.4" height="7.4" viewBox="0 0 7.4 7.4"><path d="M3.7 0 V7.4 M0 3.7 H7.4" stroke="#555" stroke-width="0.75"/></svg></span>
 <span style="left:163px;top:3px"><svg width="9" height="10" viewBox="0 0 9 10"><path d="M1.4 0.5 H6.2 V2.4 H8.2 V8.6 Q8.2 9.5 7.3 9.5 H1.4 Q0.5 9.5 0.5 8.6 V1.4 Q0.5 0.5 1.4 0.5 Z" fill="none" stroke="#666" stroke-width="0.8"/><path d="M6.4 0.7 Q8 0.7 8 2.4" fill="none" stroke="#888" stroke-width="0.6"/><path d="M4.2 3.6 V7 M2.5 5.3 H5.9" stroke="#666" stroke-width="0.7"/></svg></span>
 <span style="left:178.5px;top:7.2px"><svg width="9.4" height="2" viewBox="0 0 9.4 2"><rect x="0.2" y="0.2" width="1.7" height="1.6" fill="#444"/><rect x="3.85" y="0.2" width="1.7" height="1.6" fill="#444"/><rect x="7.5" y="0.2" width="1.7" height="1.6" fill="#444"/></svg></span>
 <span style="left:192.6px;top:4.5px"><svg width="10" height="7.4" viewBox="0 0 10 7.4"><path d="M3.2 0.5 H0.5 V6.9 H3.2 M2.6 3.7 H9.2 M6.8 1.2 L9.4 3.7 L6.8 6.2" fill="none" stroke="#b0b0b0" stroke-width="0.75"/></svg></span>
 <span class="vsep" style="left:205.2px;top:0.4px;height:15.2px"></span>
 <span class="t" style="left:209.6px;top:2.2px">3 items</span>
 <span style="left:806px;top:2.2px;width:19px;height:10.9px;background:#d8d8d8"></span>
 <span style="left:825px;top:2.2px;width:19px;height:10.9px;background:#fff;box-shadow:0 0 0 0.5px #e2e2e2"></span>
 <span style="left:812.3px;top:5.2px"><svg width="7.4" height="7" viewBox="0 0 7.4 7"><rect x="0.4" y="0.4" width="6.6" height="6.2" rx="0.4" fill="none" stroke="#6a6a6a" stroke-width="0.8"/><path d="M0.4 3.4 H7 M3.7 0.4 V6.6" stroke="#6a6a6a" stroke-width="0.8"/></svg></span>
 <span style="left:830.4px;top:4.8px"><svg width="9" height="7" viewBox="0 0 9 7"><rect x="0.5" y="0.5" width="4.4" height="3" rx="1" fill="none" stroke="#555" stroke-width="0.7" transform="rotate(25 2.7 2)"/><rect x="3.6" y="3" width="4.4" height="3" rx="1" fill="none" stroke="#555" stroke-width="0.7" transform="rotate(25 5.8 4.5)"/></svg></span>
 <span style="left:846.8px;top:4.4px"><svg width="11" height="9" viewBox="0 0 11 9"><path d="M0.2 2.2 H1.4 M6.4 2.2 H10.8 M0.2 6.8 H5 M9.6 6.8 H10.8" stroke="#555" stroke-width="0.7"/><rect x="1.4" y="0.9" width="5" height="2.6" rx="0.9" fill="none" stroke="#555" stroke-width="0.7"/><rect x="5" y="5.5" width="4.6" height="2.6" rx="0.9" fill="none" stroke="#555" stroke-width="0.7"/></svg></span>
 <span style="left:862px;top:3.4px"><svg width="11" height="10" viewBox="0 0 11 10"><g fill="none" stroke="#666" stroke-width="0.7"><rect x="0.4" y="0.4" width="4" height="3.6"/><rect x="6.4" y="0.4" width="4" height="3.6"/><rect x="0.4" y="5.8" width="4" height="3.6"/><rect x="6.4" y="5.8" width="4" height="3.6"/></g><path d="M0.4 7.6 H4.4 M6.4 7.6 H10.4 M0.4 1.6 H4.4 M6.4 1.6 H10.4" stroke="#666" stroke-width="0.5"/></svg></span>
 <span class="t" style="left:890.4px;top:2.2px;--sx:.84">No Label</span>
 <span class="tri" style="left:941.2px;top:6.9px;border-left-width:2.3px;border-right-width:2.3px;border-top-width:2.7px;border-top-color:#4a4a4a"></span>
 <span class="vsep" style="left:949px;top:2.6px;height:10.6px"></span>
 <span class="t" style="left:963.8px;top:2.2px;--sx:.84">No Status</span>
 <span class="tri" style="left:1015.4px;top:6.9px;border-left-width:2.3px;border-right-width:2.3px;border-top-width:2.7px;border-top-color:#4a4a4a"></span>
</div>
<div id="bottomstrip"></div>
</div>
</body></html>
